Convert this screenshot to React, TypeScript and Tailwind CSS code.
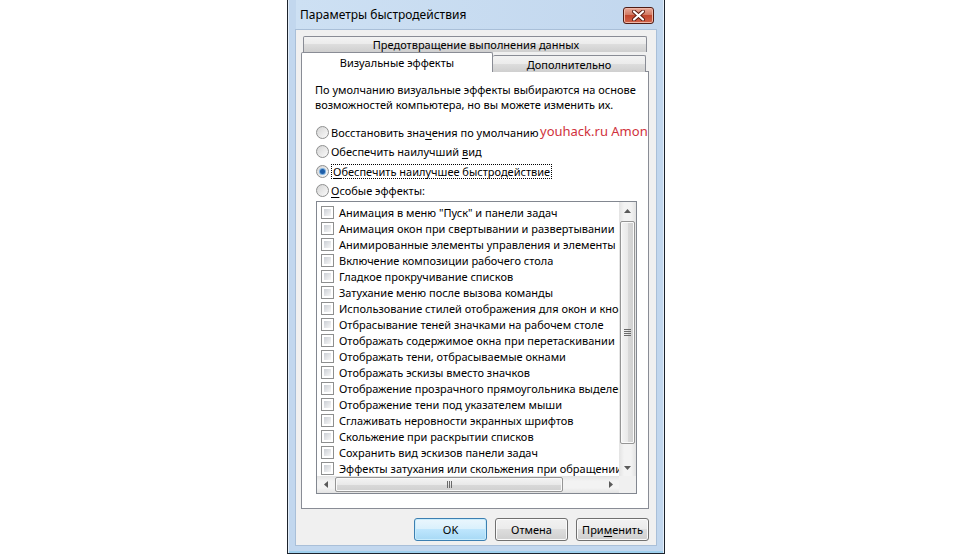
import { type FC, type ReactNode } from "react";
import clsx from "clsx";

const effects = [
  'Анимация в меню "Пуск" и панели задач',
  "Анимация окон при свертывании и развертывании",
  "Анимированные элементы управления и элементы внутри окна",
  "Включение композиции рабочего стола",
  "Гладкое прокручивание списков",
  "Затухание меню после вызова команды",
  "Использование стилей отображения для окон и кнопок",
  "Отбрасывание теней значками на рабочем столе",
  "Отображать содержимое окна при перетаскивании",
  "Отображать тени, отбрасываемые окнами",
  "Отображать эскизы вместо значков",
  "Отображение прозрачного прямоугольника выделения",
  "Отображение тени под указателем мыши",
  "Сглаживать неровности экранных шрифтов",
  "Скольжение при раскрытии списков",
  "Сохранить вид эскизов панели задач",
  "Эффекты затухания или скольжения при обращении к меню",
];

const Radio: FC<{ checked?: boolean }> = ({ checked }) => (
  <span className="flex h-[13px] w-[13px] shrink-0 items-center justify-center rounded-full border border-[#8e8f8f] bg-[linear-gradient(135deg,#d4d4d4,#fbfbfb)]">
    {checked && <span className="h-[5px] w-[5px] rounded-full bg-[#1f5ea8] shadow-[0_0_0_1px_#7fb2e0]" />}
  </span>
);

const Check = () => (
  <span className="h-[13px] w-[13px] shrink-0 border border-[#8e8f8f] bg-white p-[2px]">
    <span className="block h-full w-full bg-[linear-gradient(135deg,#cbcfd5,#f7f7f7)]" />
  </span>
);

const Arrow: FC<{ dir: "up" | "down" | "left" | "right" }> = ({ dir }) => {
  const pts = {
    up: "0,4 3.5,0 7,4",
    down: "0,0 3.5,4 7,0",
    left: "4,0 0,3.5 4,7",
    right: "0,0 4,3.5 0,7",
  }[dir];
  const vertical = dir === "up" || dir === "down";
  return (
    <svg width={vertical ? 7 : 4} height={vertical ? 4 : 7} viewBox={vertical ? "0 0 7 4" : "0 0 4 7"}>
      <polygon points={pts} fill="#5a5a5a" />
    </svg>
  );
};

const Btn: FC<{ children: ReactNode; primary?: boolean }> = ({ children, primary }) => (
  <div
    className={clsx(
      "flex h-[23px] w-[73px] items-center justify-center rounded-[3px] border",
      primary
        ? "border-[#3c7fb1] bg-[linear-gradient(#eaf6fd,#d9f0fc_50%,#bee6fd_50%,#a7d9f5)] shadow-[inset_0_0_0_1px_#c8ecfc]"
        : "border-[#707070] bg-[linear-gradient(#f2f2f2,#ebebeb_50%,#dddddd_50%,#cfcfcf)] shadow-[inset_0_0_0_1px_#fbfbfb]"
    )}
  >
    {children}
  </div>
);

const VScroll = () => (
  <div className="flex w-[17px] flex-col bg-[linear-gradient(90deg,#e3e3e3,#f3f3f3_30%,#f3f3f3_70%,#e3e3e3)]">
    <div className="flex h-[17px] items-center justify-center">
      <Arrow dir="up" />
    </div>
    <div className="mx-px mt-[2px] flex h-[223px] items-center justify-center rounded-[2px] border border-[#959595] bg-[linear-gradient(90deg,#f4f4f4,#e9e9e9_50%,#d9d9d9_50%,#d0d0d0)] shadow-[inset_0_0_0_1px_#fafafa]">
      <div className="flex flex-col gap-px">
        <span className="h-px w-[7px] bg-[#6a6a6a]" />
        <span className="h-px w-[7px] bg-[#6a6a6a]" />
        <span className="h-px w-[7px] bg-[#6a6a6a]" />
        <span className="h-px w-[7px] bg-[#6a6a6a]" />
      </div>
    </div>
    <div className="flex-1" />
    <div className="flex h-[17px] items-center justify-center">
      <Arrow dir="down" />
    </div>
  </div>
);

const HScroll = () => (
  <div className="flex flex-1 bg-[linear-gradient(#e3e3e3,#f3f3f3_30%,#f3f3f3_70%,#e3e3e3)]">
    <div className="flex w-[17px] items-center justify-center">
      <Arrow dir="left" />
    </div>
    <div className="my-px ml-px flex w-[228px] items-center justify-center rounded-[2px] border border-[#959595] bg-[linear-gradient(#f4f4f4,#e9e9e9_50%,#d9d9d9_50%,#d0d0d0)] shadow-[inset_0_0_0_1px_#fafafa]">
      <div className="flex gap-px">
        <span className="h-[7px] w-px bg-[#6a6a6a]" />
        <span className="h-[7px] w-px bg-[#6a6a6a]" />
        <span className="h-[7px] w-px bg-[#6a6a6a]" />
      </div>
    </div>
    <div className="flex-1" />
    <div className="flex w-[17px] items-center justify-center">
      <Arrow dir="right" />
    </div>
  </div>
);

export default function App() {
  return (
    <div className="min-h-screen bg-white pl-[287px] font-['Segoe_UI','Noto_Sans',sans-serif] text-[11px] leading-none text-black">
      <div className="flex h-[554px] w-[378px] flex-col border-x border-b border-[#1c232c] bg-[#c2d7ee] px-[8px] pb-[8px] shadow-[inset_1px_0_0_#e4eef9,inset_-1px_0_0_#e4eef9,inset_0_-2px_0_#9fd0ee]">
        {/* title bar */}
        <div className="flex h-[30px] items-start justify-between bg-[linear-gradient(90deg,#cde0f3,#c2d7ee)]">
          <span className="pl-[4px] pt-[9px] text-[12px]">Параметры быстродействия</span>
          <div className="mr-[2px] mt-[7px] flex h-[17px] w-[31px] items-center justify-center rounded-[3px] border border-[#4f1c14] bg-[linear-gradient(#e9a999,#d27a63_45%,#c2472e_50%,#d0634a)] shadow-[inset_0_0_0_1px_#efb7a8]">
            <svg width="13" height="11" viewBox="0 0 13 11">
              <path d="M2 1.5 L11 9.5 M11 1.5 L2 9.5" stroke="#5a1a10" strokeWidth="4" strokeLinecap="round" />
              <path d="M2 1.5 L11 9.5 M11 1.5 L2 9.5" stroke="#ffffff" strokeWidth="2.2" strokeLinecap="round" />
            </svg>
          </div>
        </div>

        {/* client area */}
        <div className="flex flex-1 flex-col bg-[#f0f0f0] px-[5px] pt-[6px] shadow-[0_0_0_1px_#a9bfd8]">
          <div className="ml-[2px] flex h-[16px] w-[344px] items-center justify-center rounded-t-[2px] border border-b-0 border-[#898c95] bg-[linear-gradient(#f3f3f3,#ebebeb_50%,#dddddd_50%,#cfcfcf)] pl-[2px]">
            Предотвращение выполнения данных
          </div>
          <div className="relative z-10 -mb-px flex h-[20px] items-end">
            <div className="flex h-[20px] w-[192px] items-center justify-center rounded-t-[2px] border border-b-0 border-[#898c95] bg-white pb-[1px]">
              Визуальные эффекты
            </div>
            <div className="flex h-[17px] w-[153px] items-center justify-center rounded-t-[2px] border border-b-0 border-l-0 border-[#898c95] bg-[linear-gradient(#f3f3f3,#ebebeb_50%,#dddddd_50%,#cfcfcf)]">
              Дополнительно
            </div>
          </div>

          <div className="relative flex h-[438px] w-[348px] flex-col border border-[#898c95] bg-white pl-[14px] pt-[10px]">
            <p className="-ml-px leading-[15px]">
              По умолчанию визуальные эффекты выбираются на основе
              <br />
              возможностей компьютера, но вы можете изменить их.
            </p>

            <div className="mt-[10px] flex flex-col">
              <div className="flex h-[20px] items-center gap-[2px]">
                <Radio />
                <span>
                  Восстановить зна<u className="underline-offset-2">ч</u>ения по умолчанию
                </span>
              </div>
              <div className="flex h-[19px] items-center gap-[2px]">
                <Radio />
                <span>
                  Обеспечить наилучший <u className="underline-offset-2">в</u>ид
                </span>
              </div>
              <div className="flex h-[20px] items-center gap-[2px]">
                <Radio checked />
                <span className="border border-dotted border-black px-px py-px">
                  <u className="underline-offset-2">О</u>беспечить наилучшее быстродействие
                </span>
              </div>
              <div className="flex h-[19px] items-center gap-[2px]">
                <Radio />
                <span>
                  <u className="underline-offset-2">О</u>собые эффекты:
                </span>
              </div>
            </div>

            <div className="mt-[1px] flex h-[293px] w-[321px] flex-col border border-[#828790]">
              <div className="flex min-h-0 flex-1">
                <div className="min-w-0 flex-1 overflow-hidden pt-[2px]">
                  {effects.map((label) => (
                    <div key={label} className="flex h-[16px] items-center gap-[5px] whitespace-nowrap pl-[4px]">
                      <Check />
                      <span>{label}</span>
                    </div>
                  ))}
                </div>
                <VScroll />
              </div>
              <div className="flex h-[17px]">
                <HScroll />
                <div className="w-[17px] bg-[#f0f0f0]" />
              </div>
            </div>

            <span className="absolute left-[238px] top-[53px] whitespace-nowrap text-[13px] text-[#d0313c]">youhack.ru Amon</span>
          </div>

          <div className="mt-[9px] flex justify-end gap-[8px] pr-[2px]">
            <Btn primary>OK</Btn>
            <Btn>Отмена</Btn>
            <Btn>
              При<u className="underline-offset-2">м</u>енить
            </Btn>
          </div>
        </div>
      </div>
    </div>
  );
}
